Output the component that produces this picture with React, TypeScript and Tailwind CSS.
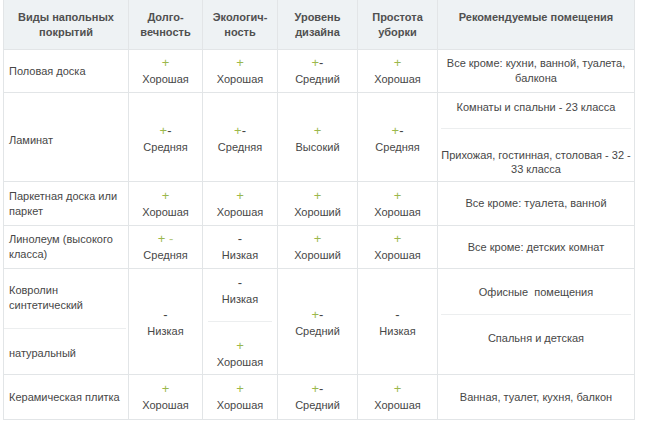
import React from "react";

const G = "text-[#9bb84c]";

function Sign({ s }: { s: string }) {
  if (s === "+") return <span className={G}>+</span>;
  if (s === "-") return <span className="text-[#444]">-</span>;
  if (s === "+-")
    return (
      <span>
        <span className={G}>+</span>
        <span className="text-[#444]">-</span>
      </span>
    );
  return (
    <span className={G}>
      + <span className="text-[#b5c97e]">-</span>
    </span>
  );
}

function Rate({ s, l }: { s: string; l: string }) {
  return (
    <div className="flex flex-col items-center leading-[16px]">
      <div className="text-[13px] leading-[16px]">
        <Sign s={s} />
      </div>
      <div>{l}</div>
    </div>
  );
}

const W = ["w-[125px]", "w-[74px]", "w-[75px]", "w-[80px]", "w-[80px]", "w-[197px]"];

function Cell({
  i,
  children,
  left,
  className = "",
}: {
  i: number;
  children?: React.ReactNode;
  left?: boolean;
  className?: string;
}) {
  return (
    <div
      className={`${W[i]} shrink-0 border-r border-[#e2e5e7] flex items-center ${
        left ? "justify-start pl-[5px] pr-1 text-left" : "justify-center text-center"
      } ${className}`}
    >
      {children}
    </div>
  );
}

function Row({ h, children }: { h: string; children: React.ReactNode }) {
  return <div className={`flex border-b border-[#e2e5e7] ${h}`}>{children}</div>;
}

export default function App() {
  const head = [
    ["Виды напольных", "покрытий"],
    ["Долго-", "вечность"],
    ["Экологич-", "ность"],
    ["Уровень", "дизайна"],
    ["Простота", "уборки"],
    ["Рекомендуемые помещения"],
  ];
  return (
    <div
      className="w-[659px] h-[439px] bg-white text-[11px] text-[#474747] leading-[15px]"
      style={{ fontFamily: '"Liberation Sans", Arial, sans-serif' }}
    >
      <div className="ml-[3px] w-[632px] border-l border-[#e2e5e7]">
        {/* header */}
        <div className="flex border-b border-[#e2e5e7] h-[50px] bg-[#eef2f4]">
          {head.map((h, i) => (
            <div
              key={i}
              className={`${W[i]} shrink-0 border-r border-[#e2e5e7] pt-[10px] text-center font-bold text-[#505050] leading-[15px]`}
            >
              {h.map((t, j) => (
                <div key={j}>{t}</div>
              ))}
            </div>
          ))}
        </div>

        {/* Половая доска */}
        <Row h="h-[43px]">
          <Cell i={0} left>
            Половая доска
          </Cell>
          <Cell i={1}>
            <Rate s="+" l="Хорошая" />
          </Cell>
          <Cell i={2}>
            <Rate s="+" l="Хорошая" />
          </Cell>
          <Cell i={3}>
            <Rate s="+-" l="Средний" />
          </Cell>
          <Cell i={4}>
            <Rate s="+" l="Хорошая" />
          </Cell>
          <Cell i={5}>
            <div>
              Все кроме: кухни, ванной, туалета,
              <br />
              балкона
            </div>
          </Cell>
        </Row>

        {/* Ламинат */}
        <Row h="h-[89px]">
          <Cell i={0} left className="pt-[6px]">
            Ламинат
          </Cell>
          <Cell i={1} className="pt-[3px]">
            <Rate s="+-" l="Средняя" />
          </Cell>
          <Cell i={2} className="pt-[3px]">
            <Rate s="+-" l="Средняя" />
          </Cell>
          <Cell i={3} className="pt-[3px]">
            <Rate s="+" l="Высокий" />
          </Cell>
          <Cell i={4} className="pt-[3px]">
            <Rate s="+-" l="Средняя" />
          </Cell>
          <div className={`${W[5]} shrink-0 border-r border-[#e2e5e7] flex flex-col text-center`}>
            <div className="h-[36px] flex items-center justify-center mx-[3px] border-b border-[#eceeef] pb-[7px]">
              Комнаты и спальни - 23 класса
            </div>
            <div className="flex-1 flex items-center justify-center whitespace-nowrap pt-[14px] leading-[14px]">
              <div>
                Прихожая, гостинная, столовая - 32 -
                <br />
                33 класса
              </div>
            </div>
          </div>
        </Row>

        {/* Паркет */}
        <Row h="h-[44px]">
          <Cell i={0} left>
            <div>
              Паркетная доска или
              <br />
              паркет
            </div>
          </Cell>
          <Cell i={1}>
            <Rate s="+" l="Хорошая" />
          </Cell>
          <Cell i={2}>
            <Rate s="+" l="Хорошая" />
          </Cell>
          <Cell i={3}>
            <Rate s="+" l="Хороший" />
          </Cell>
          <Cell i={4}>
            <Rate s="+" l="Хорошая" />
          </Cell>
          <Cell i={5}>Все кроме: туалета, ванной</Cell>
        </Row>

        {/* Линолеум */}
        <Row h="h-[43px]">
          <Cell i={0} left>
            <div>
              Линолеум (высокого
              <br />
              класса)
            </div>
          </Cell>
          <Cell i={1}>
            <Rate s="+ -" l="Средняя" />
          </Cell>
          <Cell i={2}>
            <Rate s="-" l="Низкая" />
          </Cell>
          <Cell i={3}>
            <Rate s="+" l="Хороший" />
          </Cell>
          <Cell i={4}>
            <Rate s="+" l="Хорошая" />
          </Cell>
          <Cell i={5}>Все кроме: детских комнат</Cell>
        </Row>

        {/* Ковролин */}
        <Row h="h-[106px]">
          <div className={`${W[0]} shrink-0 border-r border-[#e2e5e7] flex flex-col`}>
            <div className="h-[60px] flex items-center pl-[5px] mr-[2px] border-b border-[#eceeef] pb-[1px]">
              <div>
                Ковролин
                <br />
                синтетический
              </div>
            </div>
            <div className="flex-1 flex items-center pl-[5px] pt-[4px]">натуральный</div>
          </div>
          <Cell i={1} className="pt-[2px]">
            <Rate s="-" l="Низкая" />
          </Cell>
          <div className={`${W[2]} shrink-0 border-r border-[#e2e5e7] flex flex-col text-center`}>
            <div className="h-[53px] flex justify-center mx-[5px] border-b border-[#eceeef] pt-[6px]">
              <Rate s="-" l="Низкая" />
            </div>
            <div className="flex-1 flex justify-center pt-[16px]">
              <Rate s="+" l="Хорошая" />
            </div>
          </div>
          <Cell i={3} className="pt-[2px]">
            <Rate s="+-" l="Средний" />
          </Cell>
          <Cell i={4} className="pt-[2px]">
            <Rate s="-" l="Низкая" />
          </Cell>
          <div className={`${W[5]} shrink-0 border-r border-[#e2e5e7] flex flex-col text-center`}>
            <div className="h-[46px] flex items-center justify-center mx-[3px] border-b border-[#eceeef] whitespace-pre pt-[2px]">
              Офисные  помещения
            </div>
            <div className="flex-1 flex items-center justify-center pb-[12px]">
              Спальня и детская
            </div>
          </div>
        </Row>

        {/* Керамическая плитка */}
        <Row h="h-[45px]">
          <Cell i={0} left>
            Керамическая плитка
          </Cell>
          <Cell i={1}>
            <Rate s="+" l="Хорошая" />
          </Cell>
          <Cell i={2}>
            <Rate s="+" l="Хорошая" />
          </Cell>
          <Cell i={3}>
            <Rate s="+-" l="Средний" />
          </Cell>
          <Cell i={4}>
            <Rate s="+" l="Хорошая" />
          </Cell>
          <Cell i={5}>Ванная, туалет, кухня, балкон</Cell>
        </Row>
      </div>
    </div>
  );
}
